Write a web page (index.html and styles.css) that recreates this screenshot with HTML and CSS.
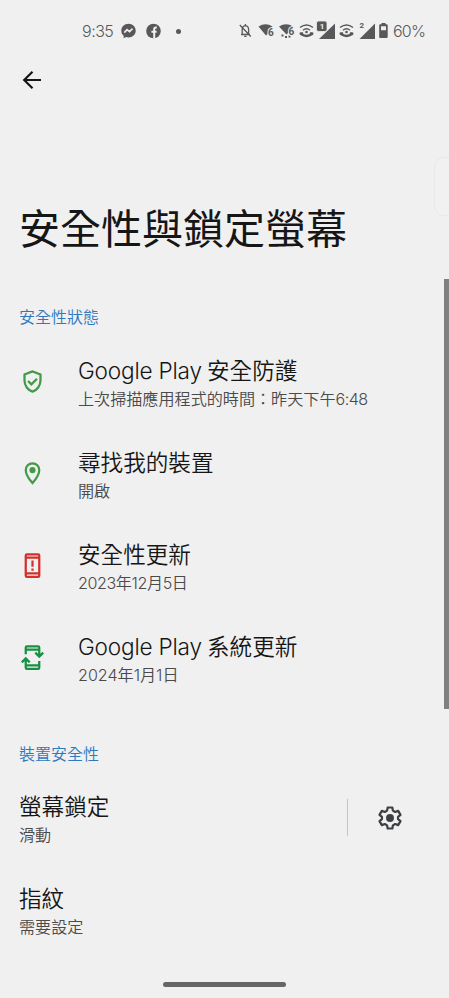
FILE: index.html
```html
<!DOCTYPE html>
<html lang="zh-Hant">
<head>
<meta charset="utf-8">
<title>安全性與鎖定螢幕</title>
<link rel="stylesheet" href="styles.css">
</head>
<body>
<div class="screen">
  <header class="status">
    <span class="time">9:35</span>
    <svg class="app-messenger" width="15" height="16" viewBox="0 0 15 16"><path fill="#58585a" d="M7.5.8C3.400.8.3 3.800.3 7.700c0 2.100.9 3.900 2.400 5.100v2.500l2.400-1.200c.8.2 1.500.3 2.400.3 4.100 0 7.200-2.900 7.200-6.700S11.600.8 7.500.8z"/><path d="M3.300 9.600 6 6.600l2.500 2L11.500 5.600" fill="none" stroke="#f0f0f0" stroke-width="1.600"/></svg>
    <svg class="app-facebook" width="15" height="16" viewBox="0 0 15 16"><circle cx="7.500" cy="8" r="7.300" fill="#58585a"/><path d="M10.800 4.500H9.900Q8.200 4.500 8.200 6.200V15.300M5.400 8.700h5.200" fill="none" stroke="#f0f0f0" stroke-width="2"/></svg>
    <span class="dot"></span>
    <span class="indicators">
      <svg width="196" height="22" viewBox="0 0 196 22" fill="#58585a">
        <g fill="none" stroke="#58585a" stroke-width="1.300"><path d="M3 14.500h9M4.200 14V9.500c0-2.300 1.200-3.600 3.200-3.900 2 .3 3.200 1.600 3.200 3.900V14M7.400 4v1.500M6.200 16.300h2.400M1.800 5l11 11.500"/></g>
        <path d="M20.500 6.500q7-4.500 14 0L33 9h-2.500v4L28 15.500z"/>
        <text x="30" y="15.500" class="wifi-label">6</text>
        <path d="M41 6.500q7-4.500 14 0L53.500 9H51v3l-2.500 2.500z"/>
        <path d="M43.500 14.500h2v2h-2zM47 16h2v2h-2zM50.500 15.500h2v2h-2z"/>
        <text x="50.500" y="15" class="wifi-label">6</text>
        <g id="wifi-call"><path d="M62 7.500q6.500-5 13 0M65 10.200q3.500-2.800 7 0" fill="none" stroke="#58585a" stroke-width="1.400"/><circle cx="68.500" cy="12" r="1.300"/><path d="M61.800 12.500l2.700-.5 1 2q3 1.300 6 0l1-2 2.700.5q.8 1.500-.4 2.600-6.300 4.200-12.600 0-1.200-1.100-.4-2.600z"/></g>
        <path d="M97 3.500v15.500H81z"/>
        <rect x="78.500" y="1" width="10.500" height="10.500" rx="2" stroke="#f0f0f0" stroke-width=".8"/>
        <text x="81.800" y="9.200" class="sim-light">1</text>
        <use href="#wifi-call" x="40"/>
        <path d="M137 3.500v15.500h-15.500z"/>
        <text x="121.500" y="8" class="sim-dark">2</text>
        <path fill-rule="evenodd" d="M143.500 4.300V3h4v1.300h1.200q1 0 1 1V17q0 1-1 1h-6.500q-1 0-1-1V5.300q0-1 1-1zM143 6.200v4h5v-4z"/>
      </svg>
    </span>
    <span class="battery">60%</span>
  </header>

  <nav class="toolbar">
    <svg width="20" height="20" viewBox="0 0 20 20" fill="none" stroke="#161616" stroke-width="2.200"><path d="M19 10H2.500M10.500 1.700 2.200 10l8.300 8.300"/></svg>
  </nav>

  <h1>安全性與鎖定螢幕</h1>

  <h2 class="first-section">安全性狀態</h2>
  <section>
    <div class="row">
      <svg class="icon green" viewBox="0 0 24 24"><path d="M12 3 4.900 5.700v5.500c0 4.500 3 8.500 7.100 9.800 4.100-1.300 7.100-5.300 7.100-9.800V5.700z"/><path d="m8 11.500 3 3 5-5"/></svg>
      <div class="text"><h3><span class="latin">Google Play</span>安全防護</h3><p>上次掃描應用程式的時間：昨天下午<span class="clock">6:48</span></p></div>
    </div>
    <div class="row">
      <svg class="icon green" viewBox="0 0 24 24"><path d="M12 3C8.600 3 6 5.600 6 9c0 4.500 6 11.500 6 11.500S18 13.500 18 9c0-3.400-2.600-6-6-6z"/><circle class="solid" cx="12" cy="9" r="2.700"/></svg>
      <div class="text"><h3>尋找我的裝置</h3><p>開啟</p></div>
    </div>
    <div class="row">
      <svg class="icon red" viewBox="0 0 24 24"><rect x="6" y="2" width="12" height="20" rx="1"/><path d="M6 5h12M6 19h12M12 7.500v5.500M12 14.600v2"/></svg>
      <div class="text"><h3>安全性更新</h3><p class="date">2023年12月5日</p></div>
    </div>
    <div class="row">
      <svg class="icon deep-green" viewBox="0 0 24 24"><path d="M6 9V3q0-1 1-1h10q1 0 1 1v7M6 5h12M14.500 7.700l3.500 3.500 3.500-3.500M18 15v6q0 1-1 1H7q-1 0-1-1v-7M6 19h12M2.500 16.300 6 12.800l3.500 3.500"/></svg>
      <div class="text"><h3><span class="latin">Google Play</span>系統更新</h3><p>2024年1月1日</p></div>
    </div>
  </section>

  <h2 class="second-section">裝置安全性</h2>
  <section>
    <div class="row plain">
      <div class="text"><h3>螢幕鎖定</h3><p>滑動</p></div>
      <span class="divider"></span>
      <svg class="gear" width="28" height="28" viewBox="0 0 24 24"><path d="M10 3h4l.5 2.700 1.900 1.100 2.600-.9 2 3.400-2.100 1.800v1.800l2.100 1.800-2 3.400-2.600-.9-1.900 1.100L14 21h-4l-.5-2.700-1.900-1.100-2.600.9-2-3.400 2.100-1.800v-1.800L3 9.300l2-3.400 2.600.9 1.900-1.100z" fill="none" stroke="#3d3f42" stroke-width="1.900" stroke-linejoin="round"/><circle cx="12" cy="12" r="3.400" fill="#3d3f42"/></svg>
    </div>
    <div class="row plain">
      <div class="text"><h3>指紋</h3><p>需要設定</p></div>
    </div>
  </section>

  <div class="edge-handle"></div>
  <div class="scrollbar"></div>
  <div class="home-bar"></div>
</div>
</body>
</html>
```

FILE: styles.css
```css
* { box-sizing: border-box; }
body { margin: 0; background: #f0f0f0; }
.screen {
  position: relative;
  width: 449px;
  height: 998px;
  overflow: hidden;
  background: #f0f0f0;
  color: #161616;
  font-family: Inter, "Noto Sans CJK TC", sans-serif;
  font-weight: 300;
}
h1, h2, h3, p { margin: 0; font-weight: 350; white-space: nowrap; }
.status {
  display: flex;
  align-items: center;
  height: 62px;
  padding-left: 82px;
  color: #58585a;
  font-size: 16px;
}
.time { width: 39px; letter-spacing: -.5px; }
.app-facebook { margin-left: 10px; }
.dot { width: 5px; height: 5px; margin-left: 15px; border-radius: 50%; background: #58585a; }
.indicators { margin-left: 57px; height: 22px; display: flex; }
.indicators svg { width: 196px; flex: none; }
.battery { margin-left: -41px; letter-spacing: -.8px; }
.wifi-label { font: 700 10px Roboto, sans-serif; stroke: #f0f0f0; stroke-width: 2px; paint-order: stroke; }
.sim-light { font: 700 8px Roboto, sans-serif; fill: #f0f0f0; }
.sim-dark { font: 700 8px Roboto, sans-serif; }
.toolbar { display: flex; align-items: center; height: 35px; padding-left: 22px; }
h1 { margin-top: 102px; padding-left: 19px; font-size: 41px; line-height: 60px; font-weight: 400; }
h2 { padding-left: 19px; font-size: 16px; line-height: 24px; color: #2f78bd; }
.first-section { margin: 46px 0 13px; }
.second-section { margin: 44px 0 12px; }
.row { display: flex; height: 92px; padding: 13px 0 0 18.500px; }
section .row:last-child { height: 80px; }
.icon { width: 27px; height: 27px; margin: 13px 32.500px 0 0; fill: none; stroke: currentColor; stroke-width: 2; }
.green { color: #429a49; }
.deep-green { color: #189044; }
.red { color: #d52f2b; }
.solid { fill: currentColor; stroke: none; }
.text { flex: 1; }
h3 { font-size: 22.6px; line-height: 32px; }
p { font-size: 16.1px; line-height: 24px; color: #4a4a4a; }
.latin { display: inline-block; width: 129px; font-weight: 300; letter-spacing: -.2px; }
.clock { letter-spacing: -.5px; }
.date { letter-spacing: -.4px; }
.plain { padding-left: 19px; }
.divider { width: 1px; height: 37px; margin-top: 8px; background: #c4c4c4; }
.gear { margin: 13px 45px 0 28px; }
.edge-handle {
  position: absolute;
  left: 434px;
  top: 157px;
  width: 22px;
  height: 59px;
  border: 1px solid #e9e9e9;
  border-radius: 10px;
  background: #f1f1f1;
}
.scrollbar { position: absolute; right: 0; top: 279px; width: 5px; height: 430px; background: #808080; }
.home-bar { position: absolute; left: 163px; top: 982px; width: 123px; height: 5px; border-radius: 3px; background: #666; }
```
